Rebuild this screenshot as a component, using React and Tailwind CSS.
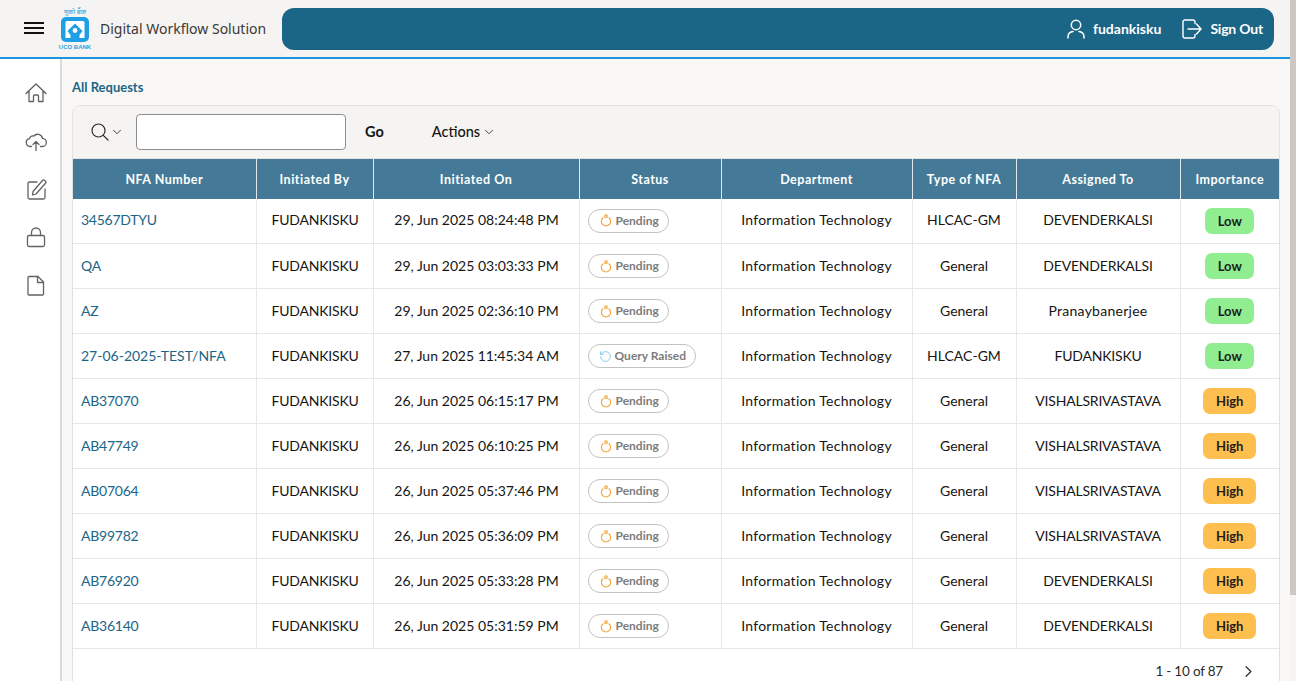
import React from "react";
import { ChevronDown, ChevronRight, RotateCcw } from "lucide-react";

const rows = [
  ["34567DTYU", "FUDANKISKU", "29, Jun 2025 08:24:48 PM", "Pending", "HLCAC-GM", "DEVENDERKALSI", "Low"],
  ["QA", "FUDANKISKU", "29, Jun 2025 03:03:33 PM", "Pending", "General", "DEVENDERKALSI", "Low"],
  ["AZ", "FUDANKISKU", "29, Jun 2025 02:36:10 PM", "Pending", "General", "Pranaybanerjee", "Low"],
  ["27-06-2025-TEST/NFA", "FUDANKISKU", "27, Jun 2025 11:45:34 AM", "Query Raised", "HLCAC-GM", "FUDANKISKU", "Low"],
  ["AB37070", "FUDANKISKU", "26, Jun 2025 06:15:17 PM", "Pending", "General", "VISHALSRIVASTAVA", "High"],
  ["AB47749", "FUDANKISKU", "26, Jun 2025 06:10:25 PM", "Pending", "General", "VISHALSRIVASTAVA", "High"],
  ["AB07064", "FUDANKISKU", "26, Jun 2025 05:37:46 PM", "Pending", "General", "VISHALSRIVASTAVA", "High"],
  ["AB99782", "FUDANKISKU", "26, Jun 2025 05:36:09 PM", "Pending", "General", "VISHALSRIVASTAVA", "High"],
  ["AB76920", "FUDANKISKU", "26, Jun 2025 05:33:28 PM", "Pending", "General", "DEVENDERKALSI", "High"],
  ["AB36140", "FUDANKISKU", "26, Jun 2025 05:31:59 PM", "Pending", "General", "DEVENDERKALSI", "High"],
];

const heads = ["NFA Number", "Initiated By", "Initiated On", "Status", "Department", "Type of NFA", "Assigned To", "Importance"];

function Logo() {
  return (
    <div className="flex h-[42px] w-[32px] flex-col items-center">
      <span className="h-[8px] text-[7px] leading-[8px] text-[#2a9fe0] whitespace-nowrap" style={{ fontFamily: '"Noto Sans", sans-serif' }}>यूको बैंक</span>
      <svg viewBox="0 0 28 25" className="mt-[1px] h-[25px] w-[28px]">
        <rect width="28" height="25" rx="5" fill="#1f9fe6" />
        <path d="M4.500 21V5.500A1.500 1.500 0 0 1 6 4h16a1.500 1.500 0 0 1 1.500 1.500V21h-5v-3l3-4L14 6.500 6.500 14l3 4v3z" fill="#fff" />
        <path d="M14 8.500l6.300 5.500-3.800 4.500V21h-1.500v-4.500h-2V21h-1.500v-2.500L7.700 14z" fill="#1f9fe6" />
        <circle cx="14" cy="13.500" r="2.400" fill="#fff" />
      </svg>
      <span className="mt-[2px] h-[6px] text-[6px] leading-[6px] font-bold text-[#2a9fe0] whitespace-nowrap" style={{ fontFamily: '"Liberation Sans", sans-serif' }}>UCO BANK</span>
    </div>
  );
}

const sideIcons = [
  <path key="h" d="M1 11.500 11 2l10 9.500M4 9v10.500h4.500V14a1 1 0 0 1 1-1h3a1 1 0 0 1 1 1v5.500H18V9" />,
  <g key="c"><path d="M6.500 16.500H5a4 4 0 0 1-.6-7.900A4 4 0 0 1 8.800 6a5 5 0 0 1 8.700 2.400 4 4 0 0 1-.5 8.100h-1.500" /><path d="M11 20.500V12M8 14.500l3-3 3 3" /></g>,
  <g key="e"><path d="M12 4H4.500A1.500 1.500 0 0 0 3 5.500v14A1.500 1.500 0 0 0 4.500 21h14a1.500 1.500 0 0 0 1.500-1.500V11" /><path d="M8 13.500 17.500 2.500a1.500 1.500 0 0 1 2.100-.1l.8.7a1.500 1.500 0 0 1 .1 2.100L11 16l-3.500 1z" /></g>,
  <g key="l"><rect x="2.500" y="9.500" width="17" height="11" rx="1.500" /><path d="M6.500 9.500V6.500a4.500 4.500 0 0 1 9 0v3" /></g>,
  <g key="f"><path d="M4 2.500h9l5.500 5.500v12a1 1 0 0 1-1 1H4a1 1 0 0 1-1-1V3.500a1 1 0 0 1 1-1z" /><path d="M12.500 2.500V8.500h6" /></g>,
];

function SideIcon({ children }) {
  return (
    <div className="flex h-[48px] w-full items-center justify-center pl-[12px]">
      <svg viewBox="0 0 22 22" className="h-[22px] w-[22px]" fill="none" stroke="#65625f" strokeWidth="1.300" strokeLinejoin="round" strokeLinecap="round">
        {children}
      </svg>
    </div>
  );
}

function StatusChip({ value }) {
  const q = value === "Query Raised";
  return (
    <span className={`inline-flex h-[24px] items-center rounded-full border border-[#c4c2c0] bg-white text-[12px] font-bold text-[#7d7c7a] ${q ? "gap-[3px] pl-[10px] pr-[9px]" : "gap-[4px] pl-[11px] pr-[9px]"}`}>
      {q ? (
        <RotateCcw size={13} strokeWidth={1.400} className="text-[#6ab8e8]" />
      ) : (
        <svg viewBox="0 0 12 13" className="h-[13px] w-[12px]" fill="none" stroke="#f4a73c" strokeWidth="1.200">
          <path d="M3.400 3.600A4.600 4.600 0 1 0 8.600 3.600" />
          <circle cx="6" cy="2.200" r="1.300" />
        </svg>
      )}
      {value}
    </span>
  );
}

function Importance({ value }) {
  const low = value === "Low";
  return (
    <span className={`inline-flex h-[26px] items-center justify-center rounded-[7px] pt-[2px] text-[13px] font-bold text-[#1e1d1c] ${low ? "w-[49px] bg-[#90ee90]" : "w-[53px] bg-[#ffbf4f]"}`}>
      {value}
    </span>
  );
}

const upper = "tracking-[-0.2px]";
const lower = "tracking-[0.27px]";
const cell = "border-r border-[#e8e7e5] pb-[1px] leading-[20px]";

export default function App() {
  return (
    <div className="relative flex h-[681px] w-[1296px] flex-col overflow-hidden bg-white text-[#161513]" style={{ fontFamily: "Lato, sans-serif" }}>
      <header className="flex h-[59px] shrink-0 items-center border-b-2 border-[#1a95e0] bg-[#f5f4f2] pt-[1px]">
        <button className="ml-[23px] flex h-[20px] w-[22px] -translate-y-[1px] items-center justify-center">
          <svg viewBox="0 0 22 14" className="h-[14px] w-[22px]" stroke="#111" strokeWidth="2">
            <path d="M1 2h20M1 7h20M1 12h20" />
          </svg>
        </button>
        <div className="ml-[14px]"><Logo /></div>
        <span className="ml-[9px] -translate-y-[1px] text-[14px] text-[#3a3937]" style={{ fontFamily: '"Noto Sans", sans-serif' }}>Digital Workflow Solution</span>
        <div className="ml-[16px] mr-[22px] flex h-[42px] flex-1 items-center justify-end rounded-[12px] bg-[#1b6586] pr-[11px] text-[14px] font-bold text-white">
          <svg viewBox="0 0 18 20" className="h-[20px] w-[18px]" fill="none" stroke="#fff" strokeWidth="1.500" strokeLinecap="round">
            <circle cx="9" cy="6" r="4.700" />
            <path d="M1 19v-1.500A5.500 5.500 0 0 1 6 12.500M17 19v-1.500a5.500 5.500 0 0 0-5-5" />
          </svg>
          <span className="ml-[8px] -translate-y-[1px]">fudankisku</span>
          <svg viewBox="0 0 20 20" className="ml-[21px] h-[20px] w-[20px]" fill="none" stroke="#fff" strokeWidth="1.400" strokeLinecap="round" strokeLinejoin="round">
            <path d="M13 4.500V3a2 2 0 0 0-2-2H3a2 2 0 0 0-2 2v14a2 2 0 0 0 2 2h8a2 2 0 0 0 2-2v-1.500" />
            <path d="M6 10h13M14.500 5l4.500 5-4.500 5" />
          </svg>
          <span className="ml-[8px] -translate-y-[1px] tracking-[-0.2px]">Sign Out</span>
        </div>
      </header>
      <div className="flex min-h-0 flex-1">
        <aside className="flex w-[62px] shrink-0 flex-col items-center border-r-2 border-[#dcdbd9] bg-white pt-[10px]">
          {sideIcons.map((p, i) => <SideIcon key={i}>{p}</SideIcon>)}
        </aside>
        <main className="min-w-0 flex-1 bg-[#f9f8f6] pl-[10px] pr-[16px] pt-[20px]">
          <div className="h-[26px] text-[13px] font-bold leading-[16px] text-[#1b6586]">All Requests</div>
          <section className="overflow-hidden rounded-t-[8px] border border-[#e3e2e0] bg-white">
            <div className="flex h-[52px] items-center bg-[#f5f4f2] pl-[18px]">
              <svg viewBox="0 0 18 18" className="h-[18px] w-[18px]" fill="none" stroke="#2c2b29" strokeWidth="1.200" strokeLinecap="round">
                <circle cx="7.500" cy="7.500" r="6.500" />
                <path d="M12.300 12.300 17 17" />
              </svg>
              <ChevronDown size={14} strokeWidth={1.500} className="ml-[1px] text-[#2c2b29]" />
              <div className="ml-[12px] h-[36px] w-[210px] rounded-[4px] border border-[#8f8d8b] bg-white" />
              <span className="ml-[19px] text-[14.5px] font-bold">Go</span>
              <span className="ml-[48px] text-[14.5px] font-medium">Actions</span>
              <ChevronDown size={14} strokeWidth={1.500} className="ml-[2px] text-[#2c2b29]" />
            </div>
            <table className="w-[1206px] table-fixed border-collapse text-[14px]">
              <colgroup>
                <col className="w-[183px]" />
                <col className="w-[117px]" />
                <col className="w-[206px]" />
                <col className="w-[142px]" />
                <col className="w-[191px]" />
                <col className="w-[104px]" />
                <col className="w-[164px]" />
                <col className="w-[99px]" />
              </colgroup>
              <thead>
                <tr className="h-[40px] border-t border-[#e3e2e0] bg-[#447a97]">
                  {heads.map((h, i) => (
                    <th key={h} className={`p-0 pt-[3px] text-center text-[12.5px] font-bold tracking-[0.5px] text-white ${i < 7 ? "border-r border-[#dfe8ed]" : ""}`}>{h}</th>
                  ))}
                </tr>
              </thead>
              <tbody>
                {rows.map((r) => (
                  <tr key={r[0]} className="h-[45px] border-b border-[#e8e7e5]">
                    <td className={`${cell} pl-[8px] text-[#1b6586] ${r[0].length < 10 ? "tracking-[-0.25px]" : ""}`}>{r[0]}</td>
                    <td className={`${cell} pl-[1px] text-center ${upper}`}>{r[1]}</td>
                    <td className={`${cell} pl-[1px] text-center`}>{r[2]}</td>
                    <td className="border-r border-[#e8e7e5] pl-[8px]"><StatusChip value={r[3]} /></td>
                    <td className={`${cell} text-center ${lower}`}>Information Technology</td>
                    <td className={`${cell} text-center`}>{r[4]}</td>
                    <td className={`${cell} text-center ${r[5] === "Pranaybanerjee" ? lower : upper}`}>{r[5]}</td>
                    <td className="text-center"><Importance value={r[6]} /></td>
                  </tr>
                ))}
              </tbody>
            </table>
            <div className="flex h-[44px] items-center justify-end pr-[21px] text-[13.5px] tracking-[-0.2px] text-[#2c2b29]">
              <span>1 - 10 of 87</span>
              <ChevronRight size={19} strokeWidth={1.500} className="ml-[16px]" />
            </div>
          </section>
        </main>
      </div>
      <div className="absolute right-0 top-0 h-[681px] w-[6px] bg-[#f5f4f2]">
        <div className="h-[595px] w-[6px] bg-[#cdc6c3]" />
      </div>
    </div>
  );
}
